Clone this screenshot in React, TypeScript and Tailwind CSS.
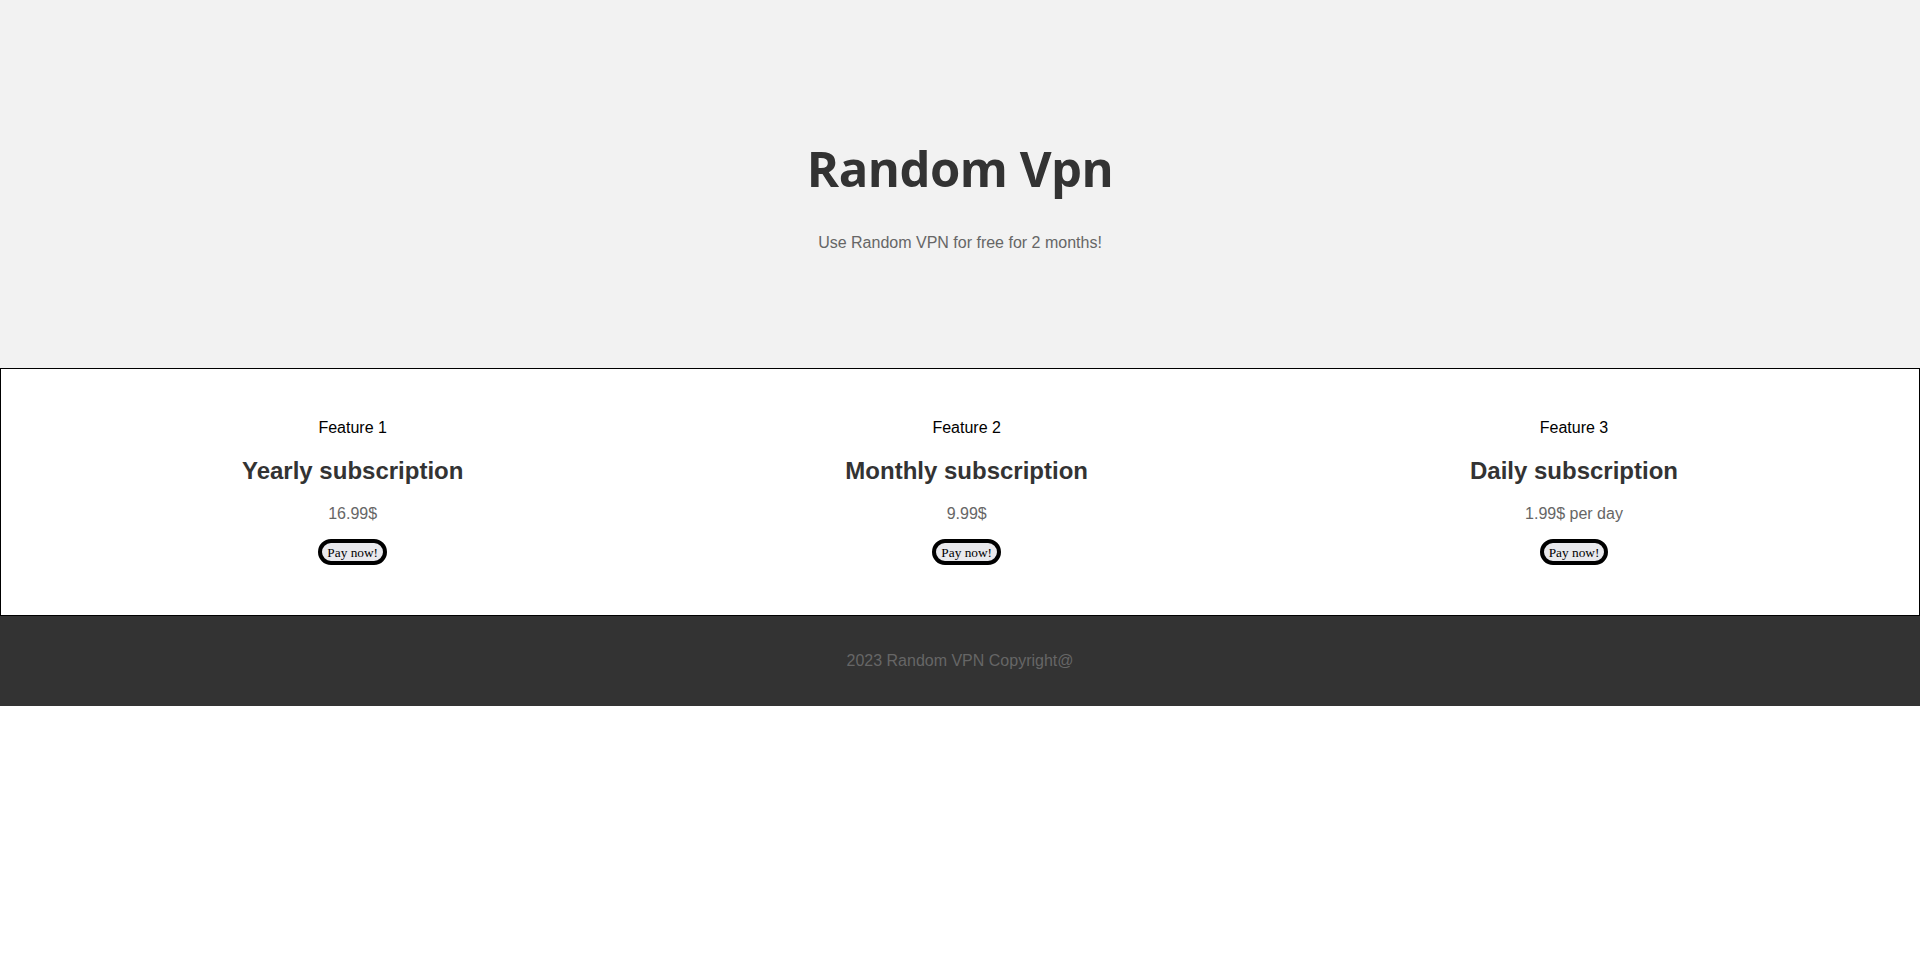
import React from "react";

const plans = [
  { feature: "Feature 1", title: "Yearly subscription", price: "16.99$" },
  { feature: "Feature 2", title: "Monthly subscription", price: "9.99$" },
  { feature: "Feature 3", title: "Daily subscription", price: "1.99$ per day" },
];

export default function App() {
  return (
    <div className="w-full min-h-[955px] bg-white font-['Liberation_Sans',Arial,sans-serif]">
      <header className="bg-[#f2f2f2] pt-[137px] pb-[116px] flex flex-col items-center">
        <h1 className="font-['Open_Sans',sans-serif] font-bold text-[49px] leading-[62px] tracking-[-0.5px] text-[#333333]">
          Random Vpn
        </h1>
        <p className="mt-[35px] text-[16px] leading-[18px] text-[#666666]">
          Use Random VPN for free for 2 months!
        </p>
      </header>

      <section className="border border-black bg-white p-[50px] flex">
        {plans.map((p) => (
          <div key={p.title} className="flex-auto flex flex-col items-center">
            <p className="text-[16px] leading-[18px] text-black">{p.feature}</p>
            <h2 className="mt-[20px] text-[24px] leading-[28px] font-bold text-[#333333]">{p.title}</h2>
            <p className="mt-[20px] text-[16px] leading-[18px] text-[#666666]">{p.price}</p>
            <button className="mt-[16px] h-[26px] px-[5px] rounded-full border-[4px] border-black bg-[#e9e9ed] font-['Liberation_Serif',serif] text-[13.33px] leading-[15px] text-black">
              Pay now!
            </button>
          </div>
        ))}
      </section>

      <footer className="bg-[#333333] py-[36px] flex justify-center">
        <p className="text-[16px] leading-[18px] text-[#666666]">2023 Random VPN Copyright@</p>
      </footer>
    </div>
  );
}
